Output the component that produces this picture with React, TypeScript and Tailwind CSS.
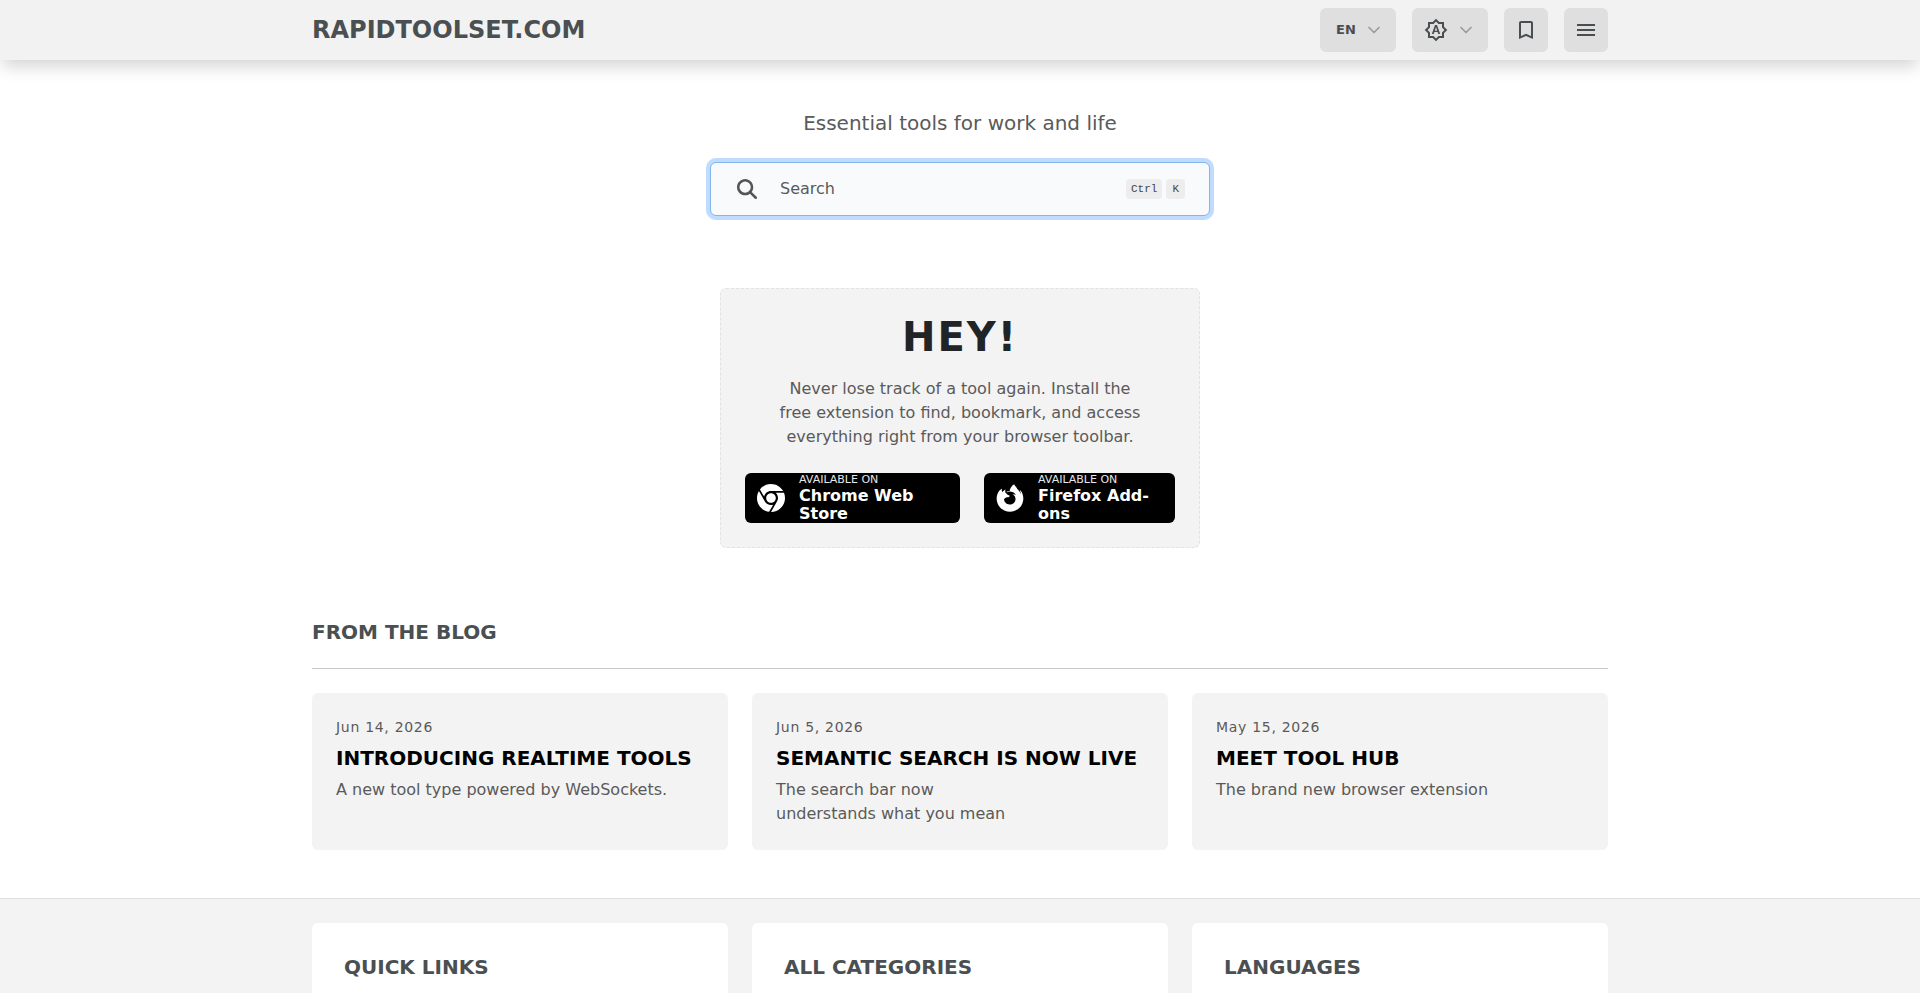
import type { ReactNode } from 'react';
import { MdOutlineBrightnessAuto, MdBookmarkBorder, MdMenu } from 'react-icons/md';
import { FaChrome, FaFirefoxBrowser, FaMagnifyingGlass } from 'react-icons/fa6';
import { ChevronDown } from 'lucide-react';

const posts = [
    { date: 'Jun 14, 2026', title: 'Introducing realtime tools', text: 'A new tool type powered by WebSockets.' },
    { date: 'Jun 5, 2026', title: 'Semantic search is now live', text: 'The search bar now understands what you mean' },
    { date: 'May 15, 2026', title: 'Meet Tool Hub', text: 'The brand new browser extension' },
];

const footerSections = ['Quick links', 'All categories', 'Languages'];

function HeaderButton({ label, wide, children }: { label: string; wide?: boolean; children: ReactNode }) {
    return (
        <button
            type="button"
            aria-label={label}
            className={`h-11 flex items-center rounded-md bg-[#dfdfdf] text-[#494e50] ${wide ? 'justify-between w-19 pl-4 pr-3' : 'justify-center w-11'}`}
        >
            {children}
        </button>
    );
}

function StoreLink({ name, icon, className }: { name: string; icon: ReactNode; className: string }) {
    return (
        <a href="#" className={`h-[50px] flex items-center gap-3 rounded-md bg-black text-white pl-2.5 pr-3 ${className}`}>
            {icon}
            <span className="flex flex-col">
                <span className="text-[11px] leading-[14px] text-gray-200 uppercase">Available on</span>
                <span className="text-base leading-[18px] font-bold">{name}</span>
            </span>
        </a>
    );
}

export default function App() {
    return (
        <div className="min-h-screen flex flex-col bg-white text-[#4a4f52] font-['DejaVu_Sans',sans-serif]">
            <header className="relative z-10 bg-[#f2f2f2] shadow-[0_8px_16px_-2px_rgba(10,10,10,0.18)]">
                <div className="max-w-[1344px] h-15 mx-auto px-6 flex items-center justify-between">
                    <a href="#" className="text-2xl font-bold uppercase">RapidToolset.com</a>
                    <div className="flex items-center gap-4">
                        <HeaderButton label="Language" wide>
                            <span className="text-[13px] font-bold">EN</span>
                            <ChevronDown className="w-5 h-5 text-[#999]" strokeWidth={2} />
                        </HeaderButton>
                        <HeaderButton label="Theme" wide>
                            <MdOutlineBrightnessAuto className="w-6 h-6 shrink-0 -ml-1" />
                            <ChevronDown className="w-5 h-5 text-[#999]" strokeWidth={2} />
                        </HeaderButton>
                        <HeaderButton label="Bookmarks">
                            <MdBookmarkBorder className="w-6 h-6" />
                        </HeaderButton>
                        <HeaderButton label="Menu">
                            <MdMenu className="w-6 h-6" />
                        </HeaderButton>
                    </div>
                </div>
            </header>

            <main className="w-full max-w-[1344px] mx-auto px-6 pt-12 pb-12">
                <section className="flex flex-col items-center">
                    <p className="text-xl leading-[30px] text-[#5a5a5a]">Essential tools for work and life</p>

                    <label className="mt-6 w-full max-w-[500px] h-[54px] flex items-center gap-[23px] pl-6.5 pr-6 rounded-md border border-[#82b5ee] bg-[#f9fafc] ring-4 ring-[#bfdbfe]">
                        <FaMagnifyingGlass className="w-5 h-5 shrink-0 text-[#555]" />
                        <input
                            type="text"
                            aria-label="Search"
                            placeholder="Search"
                            className="flex-1 min-w-0 bg-transparent text-base outline-none placeholder:text-[#5a5a5a]"
                        />
                        <span className="flex gap-1 font-['Liberation_Mono',monospace] text-[11px] text-[#444]">
                            <kbd className="h-5 px-[5px] flex items-center rounded-sm bg-[#ededee] font-[inherit]">Ctrl</kbd>
                            <kbd className="h-5 px-1.5 flex items-center rounded-sm bg-[#ededee] font-[inherit]">K</kbd>
                        </span>
                    </label>

                    <div className="mt-18 w-full max-w-[480px] rounded-md border border-dashed border-[#e2e2e2] bg-[#f3f3f3] p-6 text-center">
                        <h1 className="text-[40px] leading-12 font-bold tracking-wider text-[#212426]">HEY!</h1>
                        <p className="mt-4 mx-auto max-w-[370px] leading-6 text-[#5a5a5a]">
                            Never lose track of a tool again. Install the free extension to find, bookmark, and access everything right from your browser toolbar.
                        </p>
                        <div className="mt-6 flex gap-6 text-left">
                            <StoreLink name="Chrome Web Store" className="w-[215px]" icon={<FaChrome className="w-8 h-7 shrink-0" />} />
                            <StoreLink name="Firefox Add-ons" className="flex-1" icon={<FaFirefoxBrowser className="w-8 h-7 shrink-0" />} />
                        </div>
                    </div>
                </section>

                <section className="mt-18">
                    <h2 className="text-xl leading-6 font-bold uppercase">From the blog</h2>
                    <hr className="mt-6 border-[#c8c8c8]" />
                    <div className="mt-6 grid grid-cols-1 md:grid-cols-3 gap-6">
                        {posts.map((post) => (
                            <a key={post.title} href="#" className="rounded-md bg-[#f3f3f3] p-6">
                                <time className="block text-sm leading-[21px] tracking-wider text-[#5a5a5a]">{post.date}</time>
                                <h3 className="mt-1 text-xl leading-8 font-bold uppercase text-black">{post.title}</h3>
                                <p className="mt-1 max-w-[340px] leading-6 text-balance text-[#5a5a5a]">{post.text}</p>
                            </a>
                        ))}
                    </div>
                </section>
            </main>

            <footer className="flex-1 flex flex-col border-t border-[#dedede] bg-[#f3f3f3]">
                <div className="flex-1 w-full max-w-[1344px] mx-auto px-6 pt-6 grid grid-cols-1 md:grid-cols-3 gap-6">
                    {footerSections.map((title) => (
                        <section key={title} className="rounded-t-md bg-white px-8 pt-8">
                            <h2 className="text-xl leading-6 font-bold uppercase">{title}</h2>
                        </section>
                    ))}
                </div>
            </footer>
        </div>
    );
}
